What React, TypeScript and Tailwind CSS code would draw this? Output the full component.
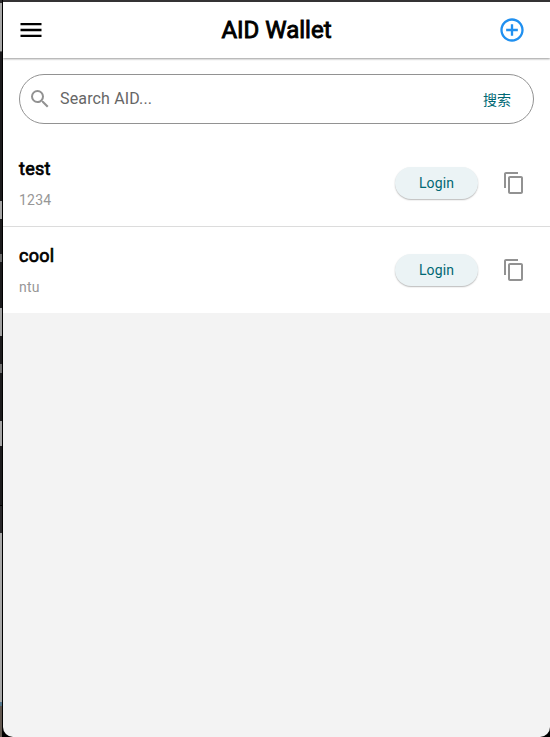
import { MdAddCircleOutline, MdContentCopy, MdMenu, MdSearch } from "react-icons/md";

const accounts = [
  { name: "test", aid: "1234" },
  { name: "cool", aid: "ntu" },
];

// Sliver of the desktop visible to the left of the window, top to bottom.
const backdrop = [
  "h-[3px] bg-[#2a292b]",
  "h-[48px] bg-[#a8a8a8]",
  "h-[1px] bg-[#555555]",
  "h-[149px] bg-[#1c1b1d]",
  "h-[18px] bg-[#a5a5a5]",
  "h-[35px] bg-[#1c1b1d]",
  "h-[8px] bg-[#6a6a6a]",
  "h-[46px] bg-[#1c1b1d]",
  "h-[28px] bg-[#a0a0a0]",
  "h-[28px] bg-[#1c1b1d]",
  "h-[9px] bg-[#707070]",
  "h-[48px] bg-[#1c1b1d]",
  "h-[25px] bg-[#a5a5a5]",
  "h-[59px] bg-[#1c1b1d]",
  "h-[1px] bg-[#000000]",
  "h-[27px] bg-[#29282a]",
  "h-[169px] bg-[#a8a8a8]",
  "h-[4px] bg-[#55788d]",
  "h-[31px] bg-[#625850]",
];

function AccountRow({ name, aid }: { name: string; aid: string }) {
  return (
    <li className="flex h-[87px] items-center border-b border-[#dcdcdc] bg-white pr-6 pl-4 last:h-[86px] last:border-b-0">
      <div className="flex-1">
        <div className="text-[18px] leading-6 font-normal tracking-[0.3px] text-black [-webkit-text-stroke:0.7px_black]">{name}</div>
        <div className="mt-[9px] text-[14px] leading-5 tracking-[0.25px] text-[#979797]">{aid}</div>
      </div>
      <button className="h-8 w-[83px] rounded-full bg-[#ebf3f5] text-[14px] leading-5 tracking-[0.1px] text-[#006874] shadow-[0_1px_1.5px_rgba(0,0,0,0.28)]">
        Login
      </button>
      <button className="ml-6 text-[#929292]" aria-label="Copy">
        <MdContentCopy size={24} />
      </button>
    </li>
  );
}

export default function App() {
  return (
    <div className="flex h-[737px] w-[550px] overflow-hidden bg-black font-[Roboto,'Noto_Sans_CJK_SC',sans-serif]">
      <div className="mr-px w-[2px] shrink-0">
        {backdrop.map((cls, i) => (
          <div key={i} className={cls} />
        ))}
      </div>
      <div className="flex flex-1 flex-col border-t-2 border-[#343234]">
        <main className="flex flex-1 flex-col overflow-hidden rounded-b-[10px] bg-[#f3f3f3]">
          <header className="z-10 grid h-14 shrink-0 grid-cols-[1fr_auto_1fr] items-center bg-white px-[14px] shadow-[0_1px_2px_rgba(0,0,0,0.4)]">
            <MdMenu size={28} />
            <h1 className="text-[24px] leading-7 font-normal text-black [-webkit-text-stroke:0.9px_black]">AID Wallet</h1>
            <MdAddCircleOutline size={28} className="mr-[10px] justify-self-end text-[#2090f0]" />
          </header>
          <div className="h-[82px] shrink-0 bg-white px-4 pt-4">
            <div className="flex h-[50px] items-center rounded-[25px] border border-[#929292] pr-[22px] pl-2">
              <MdSearch size={24} className="text-[#929292]" />
              <span className="ml-2 flex-1 text-[16px] leading-6 tracking-[0.15px] text-[#666666]">Search AID...</span>
              <span className="pt-0.5 text-[14px] leading-5 text-[#006874]">搜索</span>
            </div>
          </div>
          <ul>
            {accounts.map((a) => (
              <AccountRow key={a.name} {...a} />
            ))}
          </ul>
        </main>
      </div>
    </div>
  );
}
